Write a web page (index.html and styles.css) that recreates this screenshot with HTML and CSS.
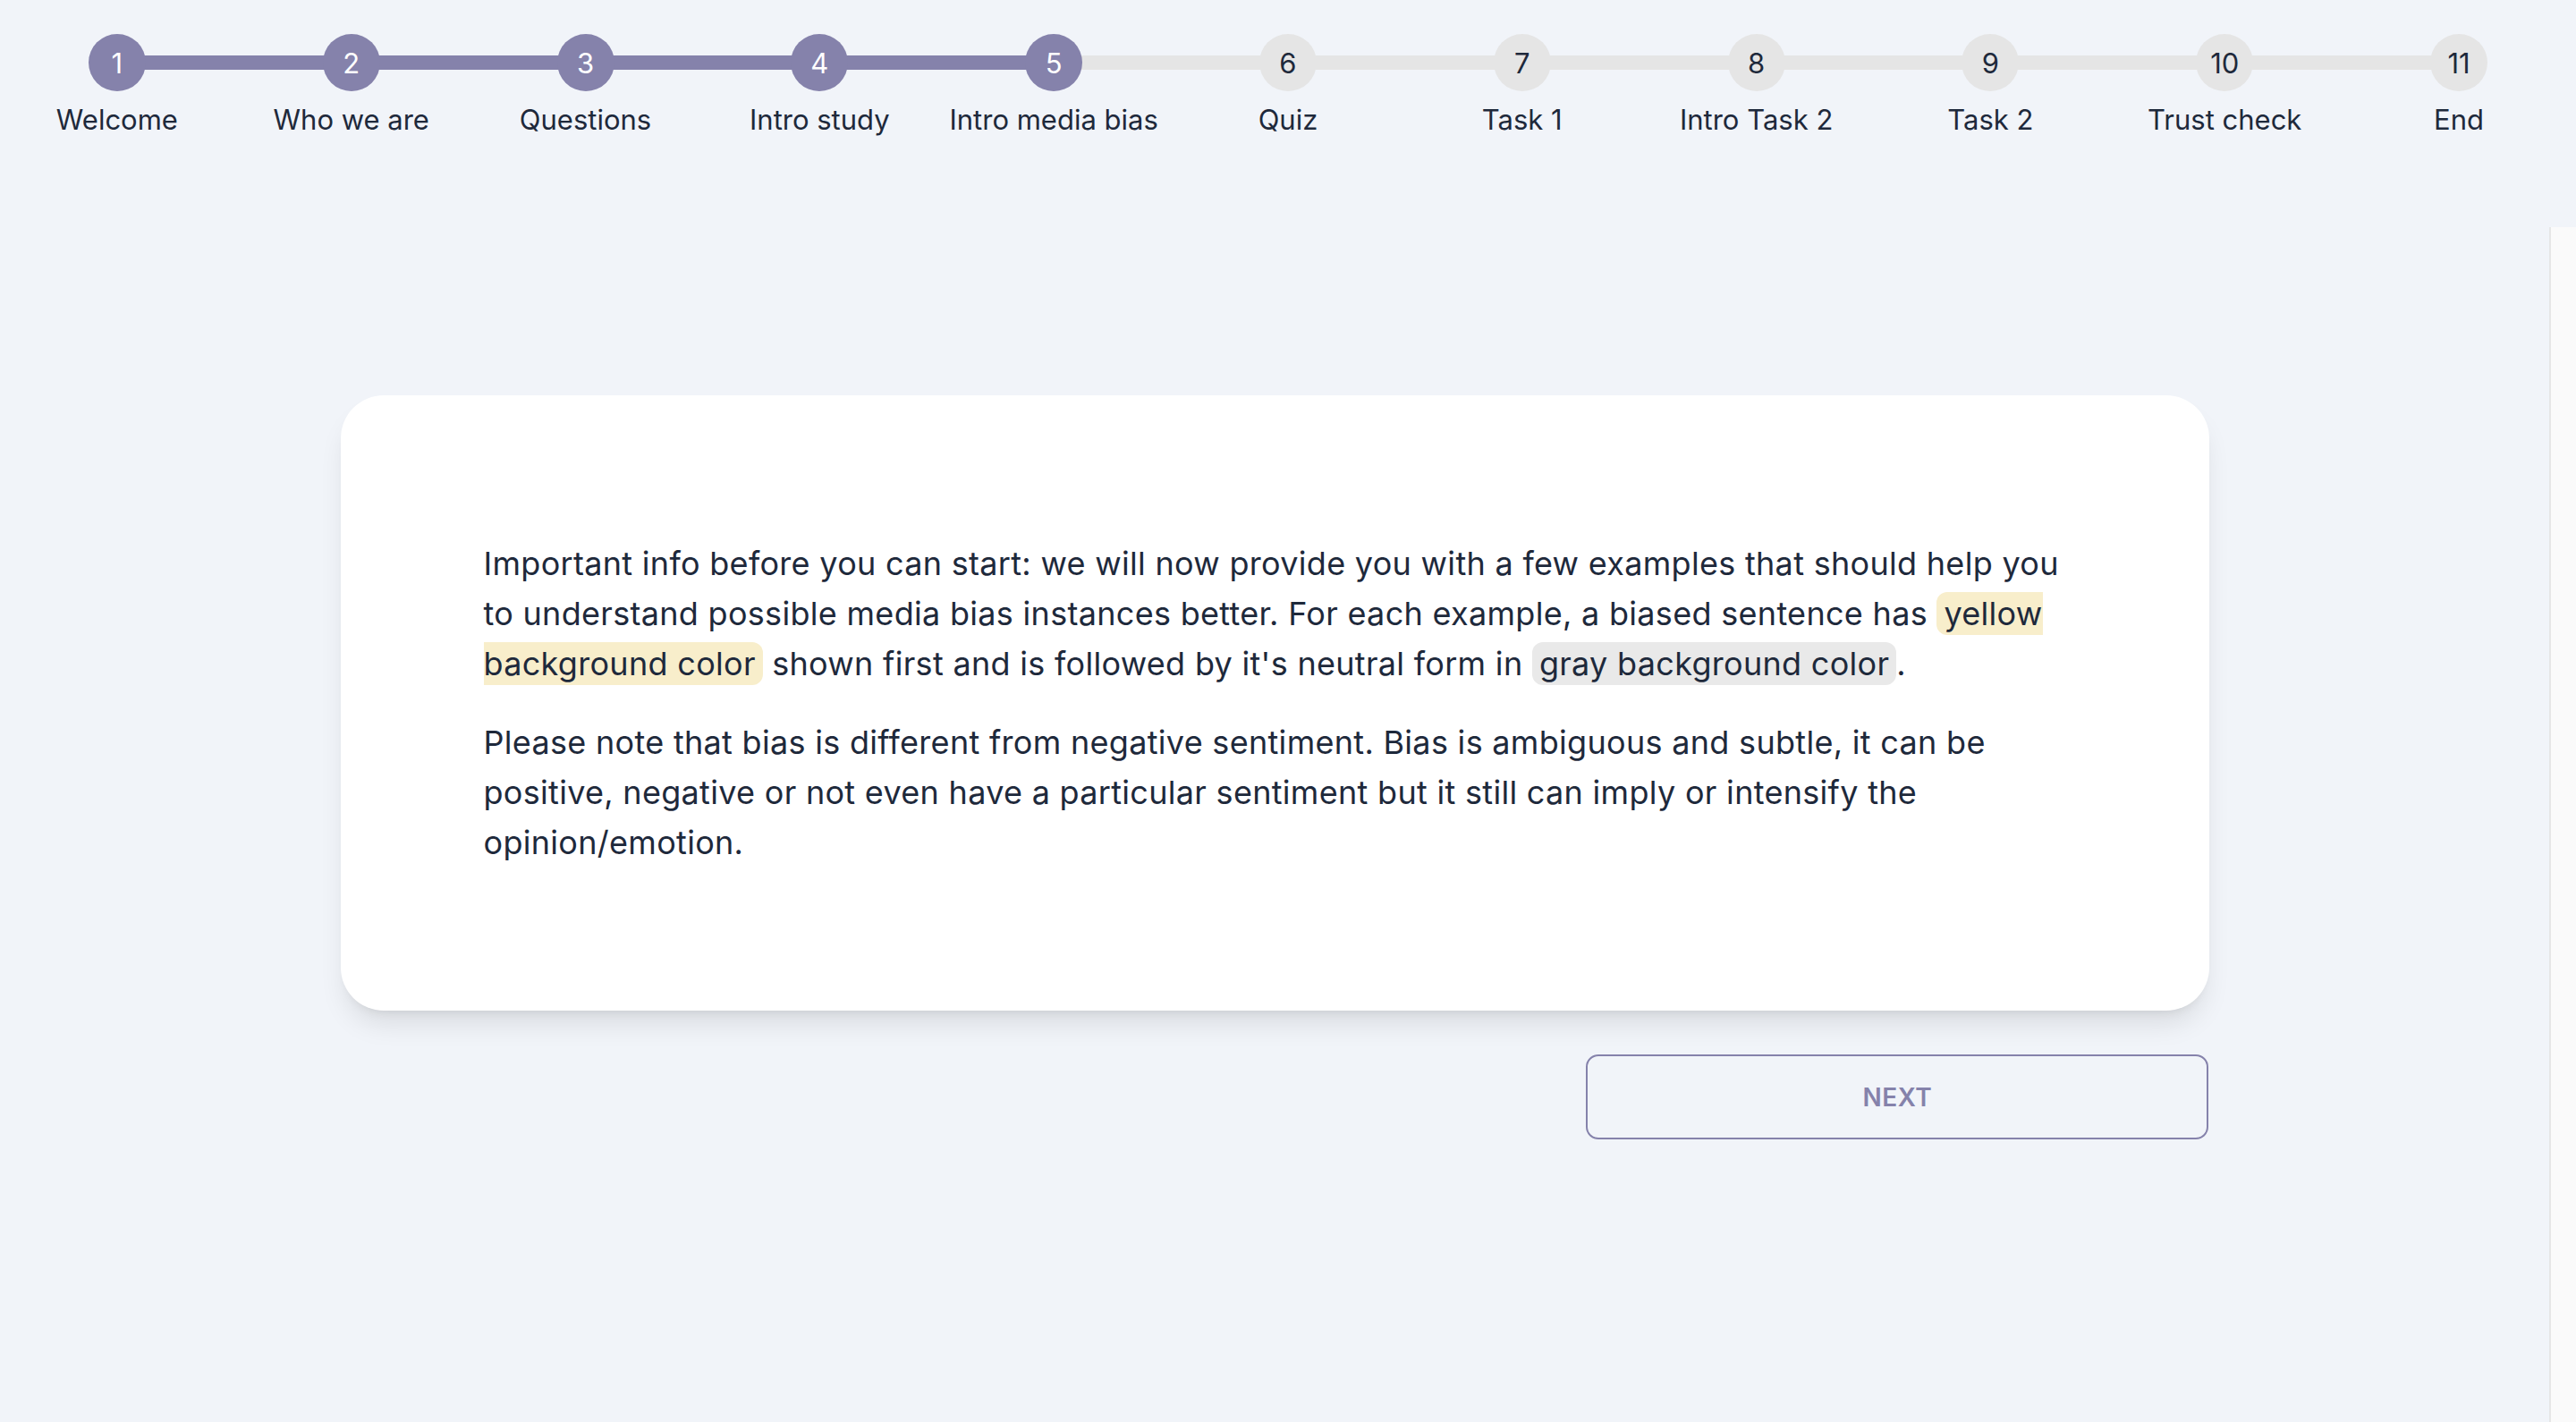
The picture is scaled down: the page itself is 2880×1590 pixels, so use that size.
FILE: index.html
```html
<!DOCTYPE html>
<html lang="en">
<head>
<meta charset="utf-8">
<title>Intro media bias</title>
<link rel="stylesheet" href="styles.css">
</head>
<body>
<header class="stepper">
  <div class="step done"><span class="dot">1</span><span class="label">Welcome</span></div>
  <div class="step done"><span class="dot">2</span><span class="label">Who we are</span></div>
  <div class="step done"><span class="dot">3</span><span class="label">Questions</span></div>
  <div class="step done"><span class="dot">4</span><span class="label">Intro study</span></div>
  <div class="step done"><span class="dot">5</span><span class="label">Intro media bias</span></div>
  <div class="step"><span class="dot">6</span><span class="label">Quiz</span></div>
  <div class="step"><span class="dot">7</span><span class="label">Task 1</span></div>
  <div class="step"><span class="dot">8</span><span class="label">Intro Task 2</span></div>
  <div class="step"><span class="dot">9</span><span class="label">Task 2</span></div>
  <div class="step"><span class="dot">10</span><span class="label">Trust check</span></div>
  <div class="step"><span class="dot">11</span><span class="label">End</span></div>
</header>
<div class="body-row">
  <main class="content">
    <div class="wrap">
      <section class="card">
        <p>Important info before you can start: we will now provide you with a few examples that should help you to understand possible media bias instances better. For each example, a biased sentence has <span class="hl hl-yellow">yellow background color</span> shown first and is followed by it's neutral form in <span class="hl hl-gray">gray background color</span>.</p>
        <p>Please note that bias is different from negative sentiment. Bias is ambiguous and subtle, it can be positive, negative or not even have a particular sentiment but it still can imply or intensify the opinion/emotion.</p>
      </section>
      <div class="actions">
        <button class="next" type="button">Next</button>
      </div>
    </div>
  </main>
  <div class="scroll-track" aria-hidden="true"></div>
</div>
</body>
</html>
```
FILE: styles.css
```css
html, body {
  margin: 0;
  padding: 0;
}
body {
  background: #f1f4f9;
  font-family: Inter, "Noto Sans", "Liberation Sans", sans-serif;
  color: #1e293b;
  height: 100vh;
  display: flex;
  flex-direction: column;
  overflow: hidden;
}
.stepper {
  display: flex;
  height: 254px;
  box-sizing: border-box;
  padding-top: 38px;
  flex: none;
}
.step {
  flex: 1;
  display: flex;
  flex-direction: column;
  align-items: center;
  position: relative;
}
.step + .step::before {
  content: "";
  position: absolute;
  top: 24px;
  right: 50%;
  width: 100%;
  height: 16px;
  background: #e5e5e5;
  z-index: 0;
}
.step.done + .step.done::before {
  background: #8582ab;
}
.dot {
  position: relative;
  z-index: 1;
  width: 64px;
  height: 64px;
  border-radius: 50%;
  background: #e5e5e5;
  color: #1e293b;
  display: flex;
  align-items: center;
  justify-content: center;
  font-size: 31px;
  line-height: 1;
}
.step.done .dot {
  background: #8582ab;
  color: #ffffff;
}
.label {
  margin-top: 8px;
  font-size: 31px;
  line-height: 48px;
  white-space: nowrap;
}
.body-row {
  flex: 1;
  display: flex;
  min-height: 0;
}
.content {
  flex: 1;
  padding-top: 188px;
  box-sizing: border-box;
}
.scroll-track {
  flex: none;
  width: 28px;
  background: #fafafa;
  border-left: 2px solid #e6e6e6;
}
.wrap {
  width: 2089px;
  margin: 0 auto;
}
.card {
  background: #ffffff;
  border-radius: 48px;
  padding: 160px;
  box-shadow: 0 20px 30px -6px rgba(0, 0, 0, 0.1), 0 8px 12px -8px rgba(0, 0, 0, 0.1);
}
.card p {
  margin: 0 0 32px;
  font-size: 36px;
  line-height: 56px;
  letter-spacing: 0.3px;
  color: #1e293b;
}
.card p:last-child {
  margin-bottom: 0;
}
.hl {
  padding: 2px 8px;
  border-radius: 12px;
}
.hl-yellow {
  background: #f8eecb;
}
.hl-gray {
  background: #e9e9e9;
}
.actions {
  display: grid;
  grid-template-columns: repeat(3, 1fr);
  margin-top: 49px;
}
.next {
  grid-column: 3;
  height: 95px;
  border: 2px solid #8582ab;
  border-radius: 14px;
  background: transparent;
  color: #8582ab;
  font-family: Inter, "Noto Sans", "Liberation Sans", sans-serif;
  font-size: 28px;
  font-weight: 600;
  text-transform: uppercase;
  letter-spacing: 0.5px;
}
```
